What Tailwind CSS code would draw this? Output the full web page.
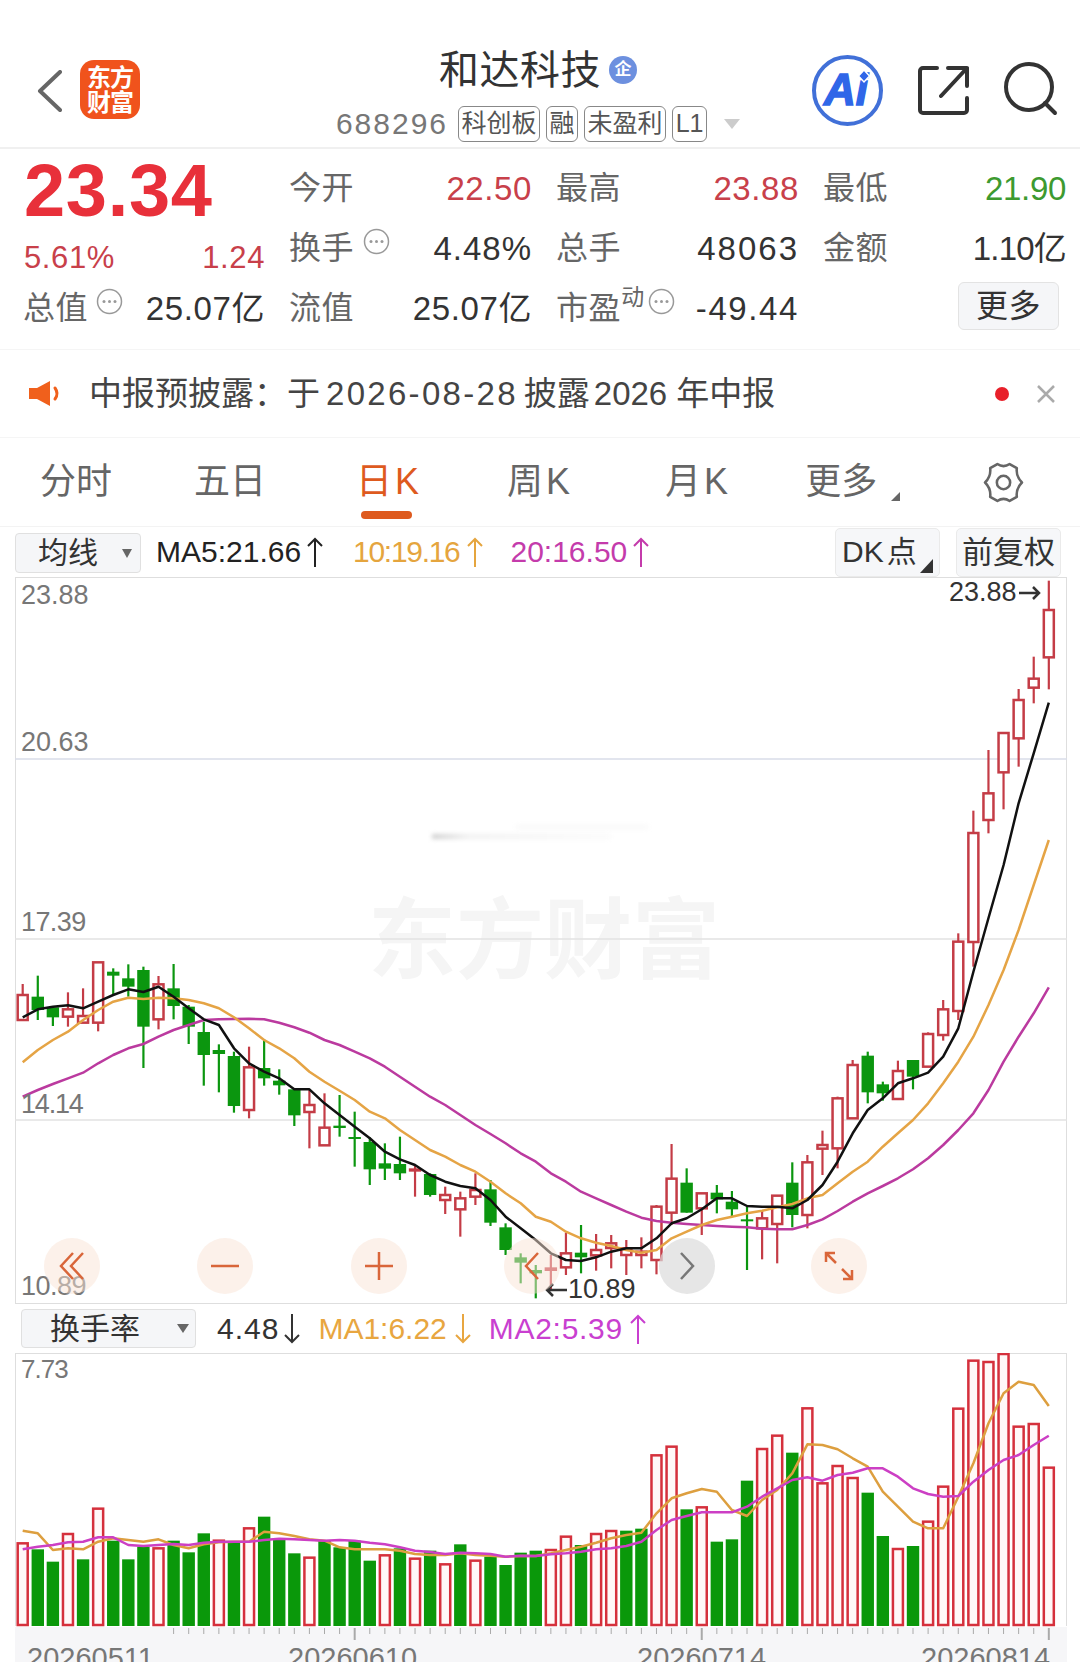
<!DOCTYPE html>
<html lang="zh-CN">
<head>
    <meta charset="UTF-8">
    <meta name="viewport" content="width=device-width, initial-scale=1.0">
    <title>和达科技 - 日K</title>
    <script src="https://cdn.jsdelivr.net/npm/@tailwindcss/browser@4"></script>
</head>
<body class="bg-white w-[1080px] h-[1662px] overflow-hidden font-['Liberation_Sans','Noto_Sans_CJK_SC',sans-serif] text-[#333]">

    <!-- header -->
    <header class="h-[147px] flex items-start pl-[37px]">
        <svg class="mt-[70px] w-[25px] h-[42px]" viewBox="0 0 25 42" fill="none" stroke="#666" stroke-width="4" stroke-linecap="round" stroke-linejoin="round"><path d="M23 2 L3 21 L23 40"/></svg>
        <div class="mt-[60px] ml-[18px] w-[60px] h-[59px] rounded-[14px] bg-[#f0531c] text-white font-bold text-[24px] leading-[25px] flex flex-col items-center justify-center tracking-[-1px]">
            <span>东方</span>
            <span>财富</span>
        </div>
        <div class="ml-[160px] w-[476px] flex flex-col items-center pt-[46px]">
            <div class="h-[48px] flex items-center">
                <span class="text-[40px] leading-none tracking-[0.5px] text-[#333]">和达科技</span>
                <span class="ml-[8px] w-[28px] h-[28px] rounded-full bg-[#6d90df] text-white text-[17px] font-bold flex items-center justify-center">企</span>
            </div>
            <div class="mt-[11px] h-[37px] flex items-center text-[#555]">
                <span class="text-[30px] tracking-[2px] text-[#777] mr-[10px]">688296</span>
                <span class="h-[36px] w-[82px] flex items-center justify-center border-[1.5px] border-[#888] rounded-[6px] text-[25px]">科创板</span>
                <span class="ml-[6px] h-[36px] w-[32px] flex items-center justify-center border-[1.5px] border-[#888] rounded-[6px] text-[25px]">融</span>
                <span class="ml-[6px] h-[36px] w-[82px] flex items-center justify-center border-[1.5px] border-[#888] rounded-[6px] text-[25px]">未盈利</span>
                <span class="ml-[6px] h-[36px] w-[35px] flex items-center justify-center border-[1.5px] border-[#888] rounded-[6px] text-[25px]">L1</span>
                <span class="ml-[17px] w-0 h-0 border-x-[8px] border-x-transparent border-t-[10px] border-t-[#ccc]"></span>
            </div>
        </div>
        <svg class="mt-[55px] ml-[36px] w-[71px] h-[71px]" viewBox="0 0 71 71">
            <circle cx="35.5" cy="35.5" r="33.5" fill="none" stroke="#4170d8" stroke-width="4"/>
            <text x="34" y="50" text-anchor="middle" font-family="Liberation Sans" font-weight="700" font-style="italic" font-size="44" fill="#2f66e8" stroke="#2f66e8" stroke-width="1.5">Ai</text>
            <path d="M52 15 L57.5 21 L52 27 L46.5 21 Z" fill="#2f66e8" stroke="#fff" stroke-width="1.5"/>
        </svg>
        <svg class="mt-[65px] ml-[35px] w-[51px] h-[51px]" viewBox="0 0 51 51" fill="none" stroke="#333" stroke-width="4" stroke-linecap="round" stroke-linejoin="round">
            <path d="M19 3 H5 a3 3 0 0 0 -3 3 V45 a3 3 0 0 0 3 3 H46 a3 3 0 0 0 3 -3 V33"/>
            <path d="M23 31 L49 3 M30 3 H49 V21"/>
        </svg>
        <svg class="mt-[62px] ml-[35px] w-[56px] h-[56px]" viewBox="0 0 56 56" fill="none" stroke="#333" stroke-width="4" stroke-linecap="round">
            <circle cx="25" cy="25" r="23"/>
            <path d="M41 41 L51 51"/>
        </svg>
    </header>
    <div class="h-[2px] bg-[#f0f0f0]"></div>

    <!-- quote panel -->
    <section class="h-[201px] pt-[9px] pl-[24px] border-b border-[#f5f5f5]">
        <div class="grid grid-cols-[241px_241px_241px_241px] gap-x-[26px] grid-rows-[60px_60px_60px] text-[33px] leading-none tracking-[0.6px]">
            <div class="text-[74px] font-bold text-[#e8303a] tracking-[0.7px] flex items-center mt-[5px]">23.34</div>
            <div class="flex justify-between items-center"><span class="-ml-[2px] text-[32px] text-[#666]">今开</span><span class="text-[#c8404a]">22.50</span></div>
            <div class="flex justify-between items-center"><span class="-ml-[2px] text-[32px] text-[#666]">最高</span><span class="text-[#c8404a]">23.88</span></div>
            <div class="flex justify-between items-center"><span class="-ml-[2px] text-[32px] text-[#666]">最低</span><span class="tracking-[-0.3px] text-[#3d9a30]">21.90</span></div>

            <div class="flex justify-between items-center pt-[18px] text-[31px] text-[#c8404a]"><span>5.61%</span><span>1.24</span></div>
            <div class="flex justify-between items-center"><span class="-ml-[2px] flex items-start text-[32px] text-[#666]">换手<svg class="ml-[9px] -mt-[4px] w-[27px] h-[27px]" viewBox="0 0 27 27" fill="#999" stroke="none"><circle cx="13.5" cy="13.5" r="12" fill="none" stroke="#999" stroke-width="1.5"/><circle cx="8" cy="13.5" r="1.5"/><circle cx="13.5" cy="13.5" r="1.5"/><circle cx="19" cy="13.5" r="1.5"/></svg></span><span class="tracking-[1px]">4.48%</span></div>
            <div class="flex justify-between items-center"><span class="-ml-[2px] text-[32px] text-[#666]">总手</span><span class="tracking-[2px]">48063</span></div>
            <div class="flex justify-between items-center"><span class="-ml-[2px] text-[32px] text-[#666]">金额</span><span class="tracking-[-0.8px]">1.10亿</span></div>

            <div class="flex justify-between items-center"><span class="-ml-[1px] flex items-start text-[32px] text-[#666]">总值<svg class="ml-[8px] -mt-[4px] w-[27px] h-[27px]" viewBox="0 0 27 27" fill="#999" stroke="none"><circle cx="13.5" cy="13.5" r="12" fill="none" stroke="#999" stroke-width="1.5"/><circle cx="8" cy="13.5" r="1.5"/><circle cx="13.5" cy="13.5" r="1.5"/><circle cx="19" cy="13.5" r="1.5"/></svg></span><span>25.07亿</span></div>
            <div class="flex justify-between items-center"><span class="-ml-[2px] text-[32px] text-[#666]">流值</span><span>25.07亿</span></div>
            <div class="flex justify-between items-center"><span class="-ml-[2px] flex items-start text-[32px] text-[#666]">市盈<span class="text-[23px] -mt-[6px]">动</span><svg class="ml-[3px] -mt-[4px] w-[27px] h-[27px]" viewBox="0 0 27 27" fill="#999" stroke="none"><circle cx="13.5" cy="13.5" r="12" fill="none" stroke="#999" stroke-width="1.5"/><circle cx="8" cy="13.5" r="1.5"/><circle cx="13.5" cy="13.5" r="1.5"/><circle cx="19" cy="13.5" r="1.5"/></svg></span><span class="tracking-[1.6px]">-49.44</span></div>
            <div class="flex justify-end items-center"><button class="mr-[7px] -mt-[4px] w-[101px] h-[48px] bg-[#f5f6f8] border border-[#e3e3e3] rounded-[6px] text-[32px]">更多</button></div>
        </div>
    </section>

    <!-- notice -->
    <section class="h-[88px] flex items-center pl-[28px] border-b border-[#f5f5f5]">
        <svg class="w-[33px] h-[27px]" viewBox="0 0 33 27" fill="#f0601c"><path d="M1 8 H9 L22 1 V26 L9 19 H1 Z"/><path d="M27 8 Q31 13.5 27 19" fill="none" stroke="#f0601c" stroke-width="3" stroke-linecap="round"/></svg>
        <span class="ml-[28px] text-[33px] leading-none text-[#444] flex">
            <span>中报预披露：于</span>
            <span class="ml-[6px] tracking-[2.3px]">2026-08-28</span>
            <span class="ml-[6px]">披露</span>
            <span class="ml-[4px]">2026</span>
            <span class="ml-[9px]">年中报</span>
        </span>
        <span class="ml-auto w-[14px] h-[14px] rounded-full bg-[#e8202a]"></span>
        <svg class="ml-[27px] mr-[24px] w-[20px] h-[20px]" viewBox="0 0 20 20" fill="none" stroke="#aaa" stroke-width="2.5"><path d="M2 2 L18 18 M18 2 L2 18"/></svg>
    </section>

    <!-- period tabs -->
    <nav class="relative h-[88px] flex items-center text-[36px] leading-none text-[#666]">
        <span class="ml-[40px]">分时</span>
        <span class="ml-[82px]">五日</span>
        <span class="ml-[90px] text-[#de5a1e] flex"><span>日</span><span class="ml-[3px]">K</span></span>
        <span class="ml-[88px] flex"><span>周</span><span class="ml-[3px]">K</span></span>
        <span class="ml-[95px] flex"><span>月</span><span class="ml-[3px]">K</span></span>
        <span class="ml-[77px]">更多</span>
        <span class="ml-[14px] mt-[28px] w-0 h-0 border-l-[9px] border-l-transparent border-b-[9px] border-b-[#666]"></span>
        <svg class="ml-[83px] w-[41px] h-[41px]" viewBox="0 0 40 40" fill="none" stroke="#666" stroke-width="2.5" stroke-linejoin="round"><path d="M14 2 Q20 6 26 2 L33 6 Q32 14 38 20 Q32 26 33 34 L26 38 Q20 34 14 38 L7 34 Q8 26 2 20 Q8 14 7 6 Z"/><circle cx="20" cy="20" r="6.5"/></svg>
        <span class="absolute left-[361px] top-[73px] w-[51px] h-[8px] rounded-full bg-[#de5a1e]"></span>
    </nav>
    <div class="h-px bg-[#f3f3f3]"></div>

    <!-- MA legend -->
    <div class="h-[50px] flex items-center text-[30px] leading-none">
        <div class="ml-[15px] w-[126px] h-[40px] mt-[2px] bg-[#f5f6f8] border border-[#e0e0e0] rounded-[4px] flex items-center pl-[22px]">
            <span>均线</span>
            <span class="ml-[24px] w-0 h-0 border-x-[5px] border-x-transparent border-t-[9px] border-t-[#666]"></span>
        </div>
        <span class="ml-[15px] text-[#222]">MA5:21.66</span>
        <svg class="ml-[5px] w-[18px] h-[30px]" viewBox="0 0 18 30" fill="none" stroke="#222" stroke-width="2"><path d="M9 30 V2 M2 9 L9 2 L16 9"/></svg>
        <span class="ml-[29px] text-[#e5a53e] tracking-[-1.3px]">10:19.16</span>
        <svg class="ml-[7px] w-[18px] h-[30px]" viewBox="0 0 18 30" fill="none" stroke="#e5a53e" stroke-width="2"><path d="M9 30 V2 M2 9 L9 2 L16 9"/></svg>
        <span class="ml-[26px] text-[#c43bab]">20:16.50</span>
        <svg class="ml-[5px] w-[18px] h-[30px]" viewBox="0 0 18 30" fill="none" stroke="#c43bab" stroke-width="2"><path d="M9 30 V2 M2 9 L9 2 L16 9"/></svg>
        <div class="relative ml-auto w-[105px] h-[49px] bg-[#f6f7f9] border border-[#eaeaea] rounded-[5px] flex items-center pl-[6px]">
            <span>DK</span><span class="ml-[3px]">点</span>
            <span class="absolute right-[6px] bottom-[3px] w-0 h-0 border-l-[13px] border-l-transparent border-b-[14px] border-b-[#333]"></span>
        </div>
        <div class="ml-[16px] mr-[19px] w-[105px] h-[49px] bg-[#f6f7f9] border border-[#eaeaea] rounded-[5px] flex items-center justify-center"><span class="text-[31px]">前复权</span></div>
    </div>

    <!-- main chart -->
    <div class="relative mx-[15px] w-[1052px] h-[727px] border border-[#dedede] box-border text-[27px] leading-none text-[#777]">
        <span class="absolute left-[352px] top-[319px] text-[88px] leading-none font-bold text-[#f5f5f5]">东方财富</span>
        <div class="absolute left-[416px] top-[256px] w-[180px] h-[5px] bg-gradient-to-r from-[#cfcfcf] via-[#f1f1f1] via-20% to-[#fbfbfb] blur-[2px]"></div>
        <div class="absolute left-[500px] top-[247px] w-[132px] h-[4px] bg-[#f8f8f8] blur-[2px]"></div>
        <svg id="mainChart" class="absolute -left-px -top-px w-[1052px] h-[727px]" viewBox="15 577 1052 727"></svg>
        <span class="absolute left-[5px] top-[4px]">23.88</span>
        <span class="absolute left-[5px] top-[151px]">20.63</span>
        <span class="absolute left-[5px] top-[331px] tracking-[-0.6px]">17.39</span>
        <span class="absolute left-[5px] top-[513px] tracking-[-1.2px]">14.14</span>
        <span class="absolute left-[5px] top-[695px] tracking-[-0.5px]">10.89</span>
        <span class="absolute left-[932px] top-[1px] px-[1px] bg-white/70 text-[#333] flex items-center">23.88<svg class="ml-[2px] w-[22px] h-[14px]" viewBox="0 0 22 14" fill="none" stroke="#333" stroke-width="2.5"><path d="M0 7 H20 M14 1 L20 7 L14 13"/></svg></span>
        <span class="absolute left-[529px] top-[698px] text-[#333] flex items-center"><svg class="mr-[1px] w-[22px] h-[14px]" viewBox="0 0 22 14" fill="none" stroke="#333" stroke-width="2.5"><path d="M22 7 H2 M8 1 L2 7 L8 13"/></svg>10.89</span>

        <!-- chart controls -->
        <div class="absolute left-[28px] top-[660px] w-[56px] h-[56px] rounded-full bg-[#f9e3d6]/50 flex items-center justify-center"><svg class="w-[26px] h-[30px]" viewBox="0 0 26 30" fill="none" stroke="#d9663a" stroke-width="2.5"><path d="M14 2 L2 15 L14 28 M24 2 L12 15 L24 28"/></svg></div>
        <div class="absolute left-[181px] top-[660px] w-[56px] h-[56px] rounded-full bg-[#f9e3d6]/50 flex items-center justify-center"><svg class="w-[28px] h-[28px]" viewBox="0 0 28 28" fill="none" stroke="#d9663a" stroke-width="2.5"><path d="M0 14 H28"/></svg></div>
        <div class="absolute left-[335px] top-[660px] w-[56px] h-[56px] rounded-full bg-[#f9e3d6]/50 flex items-center justify-center"><svg class="w-[28px] h-[28px]" viewBox="0 0 28 28" fill="none" stroke="#d9663a" stroke-width="2.5"><path d="M0 14 H28 M14 0 V28"/></svg></div>
        <div class="absolute left-[488px] top-[660px] w-[56px] h-[56px] rounded-full bg-[#f9e3d6]/50 flex items-center justify-center"><svg class="w-[16px] h-[30px]" viewBox="0 0 16 30" fill="none" stroke="#d9663a" stroke-width="2.5"><path d="M14 2 L2 15 L14 28"/></svg></div>
        <div class="absolute left-[643px] top-[660px] w-[56px] h-[56px] rounded-full bg-[#dcdcdc]/70 flex items-center justify-center"><svg class="w-[16px] h-[30px]" viewBox="0 0 16 30" fill="none" stroke="#777" stroke-width="2.5"><path d="M2 2 L14 15 L2 28"/></svg></div>
        <div class="absolute left-[795px] top-[660px] w-[56px] h-[56px] rounded-full bg-[#f9e3d6]/50 flex items-center justify-center"><svg class="w-[30px] h-[30px]" viewBox="0 0 30 30" fill="none" stroke="#d9663a" stroke-width="2.5"><path d="M2 11 V2 H11 M2 2 L12 12 M28 19 V28 H19 M28 28 L18 18"/></svg></div>
    </div>

    <!-- turnover legend -->
    <div class="h-[49px] flex items-center text-[30px] leading-none">
        <div class="ml-[21px] w-[175px] h-[39px] bg-[#f5f6f8] border border-[#e0e0e0] rounded-[4px] flex items-center pl-[28px]">
            <span>换手率</span>
            <span class="ml-[37px] w-0 h-0 border-x-[6px] border-x-transparent border-t-[9px] border-t-[#666]"></span>
        </div>
        <span class="ml-[21px] tracking-[1px] text-[#333]">4.48</span>
        <svg class="ml-[5px] w-[16px] h-[30px]" viewBox="0 0 16 30" fill="none" stroke="#333" stroke-width="2"><path d="M8 0 V28 M1 21 L8 28 L15 21"/></svg>
        <span class="ml-[18px] text-[#e8a640]">MA1:6.22</span>
        <svg class="ml-[8px] w-[16px] h-[30px]" viewBox="0 0 16 30" fill="none" stroke="#e8a640" stroke-width="2"><path d="M8 0 V28 M1 21 L8 28 L15 21"/></svg>
        <span class="ml-[18px] tracking-[0.7px] text-[#c93fd0]">MA2:5.39</span>
        <svg class="ml-[7px] w-[16px] h-[30px]" viewBox="0 0 16 30" fill="none" stroke="#c93fd0" stroke-width="2"><path d="M8 30 V2 M1 9 L8 2 L15 9"/></svg>
    </div>

    <!-- turnover chart -->
    <div class="relative mx-[15px] w-[1052px] h-[309px] text-[26px] leading-none text-[#777]">
        <div class="absolute left-0 top-0 w-full h-[273px] border border-b-0 border-[#dedede]"></div>
        <div class="absolute left-0 top-[274px] w-full h-[35px] bg-[#f6f6f8]"></div>
        <svg id="subChart" class="absolute left-0 top-0 w-[1052px] h-[309px]" viewBox="15 1353 1052 309"></svg>
        <span class="absolute left-[6px] top-[3px] tracking-[-1px]">7.73</span>
        <div class="absolute left-0 right-0 top-[291px] text-[29px] leading-none">
            <span class="absolute left-[12px]">20260511</span>
            <span class="absolute left-[273px]">20260610</span>
            <span class="absolute left-[622px]">20260714</span>
            <span class="absolute left-[906px]">20260814</span>
        </div>
    </div>

    <script>
        const X = i => 22.7 + i * 15.09;
        const Y = z => 930 + z / 3;
        const Y2 = z => 1290 + z / 3;

        // [type, high, bodyTop, bodyBottom, low]
        const candles = [
            ['r',162,195,270,270],['g',137,200,240,270],['g',232,232,262,288],['r',187,238,260,290],['r',175,258,278,278],
            ['r',97,97,278,304],['g',115,125,137,195],['g',103,145,170,200],['g',110,120,290,414],['r',138,163,268,298],
            ['g',102,175,228,268],['g',225,230,290,342],['g',275,306,375,467],['g',343,360,372,487],['g',365,378,528,548],
            ['r',350,412,540,565],['g',328,414,445,467],['g',418,452,466,494],['g',476,478,556,588],['r',480,525,546,655],
            ['r',490,593,646,646],['g',495,587,594,620],['g',545,621,625,710],['g',622,636,718,765],['g',640,700,716,750],
            ['g',620,702,730,750],['s',705,715,725,800],['g',730,732,795,800],['r',770,795,810,852],['r',785,805,838,920],
            ['r',730,780,800,825],['g',750,778,878,888],['g',880,892,960,975],['g',970,982,998,1060],['g',1005,1020,1030,1105],
            ['s',975,1012,1023,1080],['r',908,970,1012,1035],['g',885,968,982,1030],['r',912,960,976,1022],['r',915,940,954,1015],
            ['r',930,955,975,1035],['r',922,965,975,1015],['r',825,830,990,1033],['r',642,746,848,885],['g',715,758,848,848],
            ['r',790,790,835,915],['g',765,788,808,850],['g',783,815,838,860],['g',830,868,874,1020],['r',840,865,895,988],
            ['r',795,797,882,1000],['g',697,758,855,892],['r',675,697,855,895],['r',602,645,656,735],['r',500,505,655,715],
            ['r',390,405,565,565],['g',365,377,487,520],['g',455,463,490,512],['r',392,423,507,507],['g',390,390,440,478],
            ['r',307,312,410,410],['r',210,238,315,332],['r',10,35,243,270],['r',-358,-291,36,110],['r',-540,-410,-330,-290],
            ['r',-593,-591,-473,-362],['r',-723,-690,-575,-490],['r',-820,-754,-727,-680],['r',-1048,-960,-818,-722]
        ];

        const ma5 = [262,238,230,226,235,215,195,178,186,170,200,235,268,285,355,400,425,445,478,478,520,555,590,625,665,688,705,735,755,768,775,810,860,895,930,970,990,993,982,965,955,955,925,880,865,838,805,805,828,830,830,835,810,765,695,610,540,505,460,445,428,380,295,125,-36,-195,-380,-530,-682];
        const ma10 = [397,360,330,305,270,240,215,203,207,203,205,210,220,235,262,295,330,355,385,425,455,482,510,545,565,600,630,660,680,705,725,755,790,820,860,875,905,925,938,948,960,968,960,925,905,885,870,860,850,842,832,822,805,795,760,725,695,650,610,570,520,460,395,320,225,120,0,-135,-270];
        const ma20 = [500,480,462,445,428,400,375,355,342,320,300,285,270,268,267,266,268,278,292,308,330,345,365,385,410,440,470,500,525,555,585,612,640,670,695,730,755,785,805,825,845,863,873,878,882,885,888,890,892,896,898,898,885,868,843,815,790,768,745,718,685,645,600,550,480,395,320,250,172];

        const turnover = [
            ['r',760],['g',778],['g',815],['r',732],['g',808],['r',656],['g',752],['g',808],['g',770],['r',775],
            ['g',752],['g',787],['g',730],['r',752],['g',757],['r',715],['g',680],['g',745],['g',790],['r',803],
            ['g',752],['g',772],['g',752],['g',812],['r',796],['g',775],['r',806],['g',782],['r',823],['g',763],
            ['r',812],['g',800],['g',825],['g',788],['g',782],['r',780],['r',740],['g',765],['r',732],['r',723],
            ['g',722],['g',716],['r',496],['r',470],['g',658],['r',652],['g',755],['g',748],['g',572],['r',477],
            ['r',437],['g',488],['r',355],['r',580],['r',528],['r',564],['g',608],['g',738],['r',777],['g',768],
            ['r',695],['r',590],['r',356],['r',212],['r',216],['r',192],['r',410],['r',402],['r',533]
        ];
        const ma1 = [722,730,780,775,778,755,745,750,755,748,765,775,763,757,755,755,725,730,738,748,752,772,778,778,778,782,792,795,795,790,795,797,800,798,798,790,780,770,758,745,735,728,670,625,610,597,605,660,678,630,600,550,463,465,478,505,530,605,650,695,715,715,620,520,400,310,275,285,348];
        const ma2 = [778,770,765,757,755,742,742,765,768,765,762,765,758,755,755,755,750,746,748,750,752,750,752,758,763,772,782,786,792,788,790,792,800,797,798,793,790,785,778,775,768,755,720,690,678,667,667,667,650,620,595,570,562,572,555,548,535,535,560,595,612,620,618,575,540,510,495,465,437];

        const polyline = (data, toY, color) =>
            `<polyline points="${data.map((z, i) => X(i).toFixed(1) + ',' + toY(z).toFixed(1)).join(' ')}" fill="none" stroke="${color}" stroke-width="2.5" stroke-linejoin="round"/>`;

        // price chart
        let main = '';
        [759, 939, 1120].forEach(y => {
            main += `<line x1="15" x2="1067" y1="${y}" y2="${y}" stroke="${y === 759 ? '#d8dde8' : '#e2e2e2'}" stroke-width="1.5"/>`;
        });
        candles.forEach(([type, hi, top, bot, lo], i) => {
            const x = X(i);
            const color = type === 'g' ? '#0b960f' : '#c43c46';
            main += `<line x1="${x}" x2="${x}" y1="${Y(hi)}" y2="${Y(lo)}" stroke="${color}" stroke-width="2.2"/>`;
            const h = Math.max(Y(bot) - Y(top), 2);
            if (type === 'r') {
                main += `<rect x="${x - 5}" y="${Y(top)}" width="10" height="${h}" fill="#fff" stroke="${color}" stroke-width="2.5"/>`;
            } else {
                main += `<rect x="${x - 6.2}" y="${Y(top)}" width="12.4" height="${h}" fill="${color}"/>`;
            }
        });
        main += polyline(ma20, Y, '#bb3a9f') + polyline(ma10, Y, '#e5a445') + polyline(ma5, Y, '#111');
        document.getElementById('mainChart').innerHTML = main;

        // turnover chart
        let sub = '';
        turnover.forEach(([type, top], i) => {
            const x = X(i);
            if (type === 'r') {
                sub += `<rect x="${x - 5}" y="${Y2(top)}" width="10" height="${1625 - Y2(top)}" fill="#fff8f8" stroke="#d5303c" stroke-width="2.5"/>`;
            } else {
                sub += `<rect x="${x - 6.2}" y="${Y2(top)}" width="12.4" height="${1626 - Y2(top)}" fill="#0a980a"/>`;
            }
            if (i >= 10) {
                const major = i === 22 || i === 45 || i === 68;
                sub += `<line x1="${x}" x2="${x}" y1="1628" y2="${major ? 1640 : 1634}" stroke="#aaa" stroke-width="${major ? 2 : 1}"/>`;
            }
        });
        sub += polyline(ma1, Y2, '#dd9f3f') + polyline(ma2, Y2, '#cc3fc4');
        document.getElementById('subChart').innerHTML = sub;
    </script>
</body>
</html>
